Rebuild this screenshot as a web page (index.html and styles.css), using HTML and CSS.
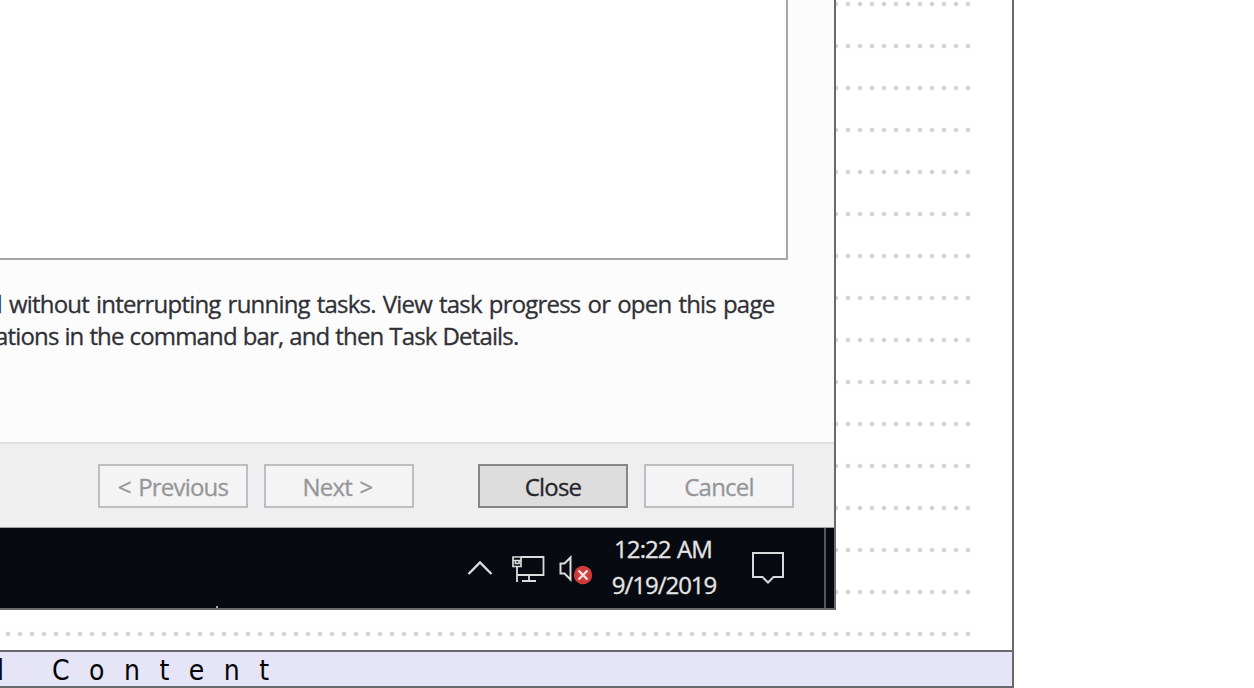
FILE: index.html
```html
<!DOCTYPE html>
<html lang="en">
<head>
<meta charset="utf-8">
<title>Related Content</title>
<link rel="stylesheet" href="styles.css">
</head>
<body>
<div class="page">
  <main class="sheet">
    <div class="capture">
      <div class="dialog">
        <div class="list"></div>
        <p class="note"><span class="line line-a">d without interrupting running tasks. View task progress or open this page</span><span class="line line-b">ations in the command bar, and then Task Details.</span></p>
      </div>
      <div class="actions">
        <button class="btn" disabled>&lt; Previous</button>
        <button class="btn btn-next" disabled>Next &gt;</button>
        <button class="btn btn-main">Close</button>
        <button class="btn" disabled>Cancel</button>
      </div>
      <div class="taskbar">
        <i class="speck"></i>
        <svg class="tray" width="130" height="40" viewBox="466 548 130 40" fill="none" stroke="#dcdcdd" stroke-width="2">
          <path d="M468.500 574 480 562.500 491.500 574" stroke-width="2.300"/>
          <path d="M521 557h22.500v18H517.500M529 575v6M522 581h14M517 567v15" stroke-width="1.800"/>
          <path d="M513 557h8v9.500h-8zM513 560.500h8M515.500 560.500v3h3.500v-3" stroke-width="1.700"/>
          <path d="M560.500 563.500h4l6-6v22l-6-6h-4z" stroke-width="2"/>
          <circle cx="583" cy="575" r="9.200" fill="#d03a3a" stroke="none"/>
          <path d="M578.500 570.500l9 9M587.500 570.500l-9 9" stroke="#f6dede" stroke-width="2.400"/>
        </svg>
        <div class="clock"><span class="time">12:22 AM</span><span class="date">9/19/2019</span></div>
        <svg class="notify" width="36" height="36" viewBox="750 550 36 36" fill="none" stroke="#d8d9da" stroke-width="2">
          <path d="M753 553h30v24h-9.500l-5.500 5.500-5.500-5.500H753z"/>
        </svg>
        <i class="peek"></i>
      </div>
    </div>
  </main>
  <footer class="band">d Content</footer>
</div>
</body>
</html>
```
FILE: styles.css
```css
* { box-sizing: border-box; }
body { margin: 0; background: #fff; overflow: hidden; }
.page {
  width: 1014px;
  height: 688px;
  border-right: 2px solid #6a6a6c;
  display: flex;
  flex-direction: column;
}
.sheet {
  height: 650px;
  padding-right: 38px;
  background: radial-gradient(circle at 6px 6px, #d2d2d2 1.500px, rgba(210,210,210,0) 2.900px) 2px -2px / 12px 42px content-box;
  overflow: hidden;
}
.capture {
  width: 836px;
  height: 610px;
  border: solid #6a6a6c;
  border-width: 0 2px 2px 0;
  display: flex;
  flex-direction: column;
  font-family: "Open Sans", "Noto Sans", sans-serif;
}
.dialog { height: 442px; background: #fcfcfc; }
.list {
  width: 788px;
  height: 260px;
  background: #fff;
  border: solid #a3a6ad;
  border-width: 0 2px 2px 0;
}
.note {
  margin: 28px 0 0;
  width: 774px;
  color: #303036;
  font-size: 24px;
  line-height: 32px;
  -webkit-text-stroke: 0.3px currentColor;
}
.line { display: block; width: max-content; white-space: nowrap; }
.line-a { margin-left: -12px; letter-spacing: -0.800px; word-spacing: 1.600px; }
.line-b { margin-left: -5px; letter-spacing: -0.840px; word-spacing: 0.500px; }
.actions {
  height: 86px;
  padding: 20px 40px 0 0;
  background: #efefef;
  border-top: 2px solid #e0e0e0;
  border-bottom: 1px solid #a2a2a2;
  display: flex;
  justify-content: flex-end;
  gap: 16px;
}
.btn {
  width: 150px;
  height: 44px;
  padding: 2px 0 0;
  border: 2px solid #bbbfc2;
  background: #f4f4f4;
  color: #96969a;
  font: 24px/38px "Open Sans", "Noto Sans", sans-serif;
  letter-spacing: -0.800px;
  word-spacing: 2px;
  -webkit-text-stroke: 0.3px currentColor;
}
.btn-next { padding-right: 3px; }
.btn-main { margin-left: 48px; border-color: #858686; background: #dddddd; color: #25252a; }
.taskbar {
  height: 80px;
  background: #070b11;
  display: flex;
  align-items: flex-start;
  color: #e4e4e5;
}
.speck { width: 2px; height: 2px; margin: 78px 0 0 216px; background: #aaa; }
.tray { margin: 20px 0 0 248px; }
.clock {
  width: 136px;
  padding-top: 3px;
  font-size: 24px;
  line-height: 36px;
  text-align: center;
  -webkit-text-stroke: 0.3px currentColor;
}
.clock span { display: block; letter-spacing: -1px; }
.clock .time { letter-spacing: -0.900px; word-spacing: 1px; text-indent: -2px; }
.notify { margin: 22px 0 0 18px; }
.peek { width: 2px; height: 80px; margin-left: 38px; background: #55585b; }
.band {
  height: 38px;
  border: solid #6a6a6c;
  border-width: 2px 0;
  background: #e6e5f7;
  color: #050505;
  font: 28px/37px "DejaVu Sans Condensed", "DejaVu Sans", sans-serif;
  font-stretch: condensed;
  letter-spacing: 19.500px;
  word-spacing: 1px;
  text-indent: -12px;
  white-space: pre;
}
```
